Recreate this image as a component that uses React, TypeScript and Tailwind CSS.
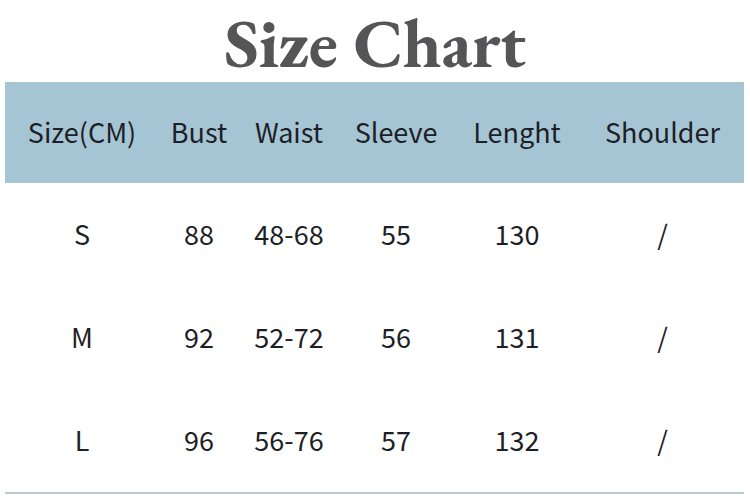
const headers = ["Size(CM)", "Bust", "Waist", "Sleeve", "Lenght", "Shoulder"];

const rows = [
  ["S", "88", "48-68", "55", "130", "/"],
  ["M", "92", "52-72", "56", "131", "/"],
  ["L", "96", "56-76", "57", "132", "/"],
];

const cols = "grid grid-cols-[154px_80px_100px_114px_128px_163px]";

export default function App() {
  return (
    <div className="w-[750px] h-[500px] bg-white overflow-hidden">
      <h1 className="pt-[3px] text-center leading-[79px] text-[#555456] text-[70px] font-bold tracking-[-0.5px] font-['EB_Garamond','Liberation_Serif',serif]">
        Size Chart
      </h1>
      <div className="mx-[5px] w-[739px] font-['Noto_Sans_CJK_SC','Noto_Sans',sans-serif] text-[#1e1e26]">
        <div className={`${cols} h-[101px] bg-[#a5c5d4] items-center text-[27px]`}>
          {headers.map((h) => (
            <div key={h} className="text-center">
              {h}
            </div>
          ))}
        </div>
        {rows.map((r) => (
          <div key={r[0]} className={`${cols} h-[103px] items-center text-[27px]`}>
            {r.map((c, i) => (
              <div key={i} className="text-center">
                {c}
              </div>
            ))}
          </div>
        ))}
        <div className="h-[2px] bg-[#bccad0]" />
      </div>
    </div>
  );
}
